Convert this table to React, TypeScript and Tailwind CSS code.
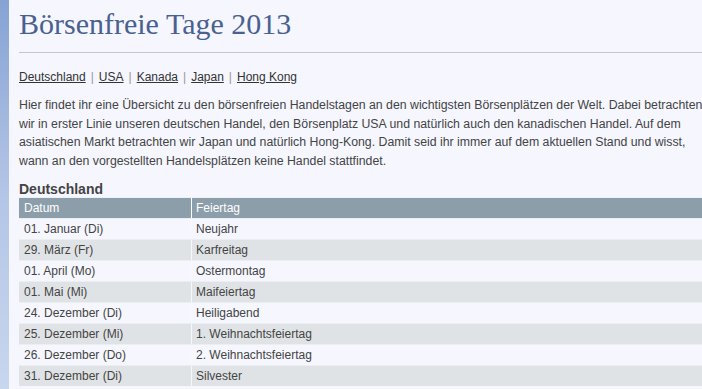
import React from "react";

const rows: [string, string][] = [
  ["01. Januar (Di)", "Neujahr"],
  ["29. März (Fr)", "Karfreitag"],
  ["01. April (Mo)", "Ostermontag"],
  ["01. Mai (Mi)", "Maifeiertag"],
  ["24. Dezember (Di)", "Heiligabend"],
  ["25. Dezember (Mi)", "1. Weihnachtsfeiertag"],
  ["26. Dezember (Do)", "2. Weihnachtsfeiertag"],
  ["31. Dezember (Di)", "Silvester"],
];

export default function App() {
  return (
    <div className="flex w-[702px] h-[389px] overflow-hidden bg-[#f5f6fe]">
      <div className="w-[9px] shrink-0 bg-gradient-to-b from-[#86a3d4] via-[#b4c6e6] to-[#c8d6ee]" />
      <div
        className="flex-1 pl-[10px] text-[#444] text-[12px]"
        style={{ fontFamily: '"Liberation Sans", Arial, sans-serif' }}
      >
        <h1
          className="text-[30px] leading-none text-[#4a6190] pt-[9px] pb-[13px]"
          style={{ fontFamily: '"Liberation Serif", "Times New Roman", serif' }}
        >
          Börsenfreie Tage 2013
        </h1>
        <div className="h-px bg-[#c4c6d0]" />
        <div className="mt-[16px] flex items-center gap-[5px] text-[#333] leading-[16px]">
          <a className="underline">Deutschland</a>
          <span className="text-[#999]">|</span>
          <a className="underline">USA</a>
          <span className="text-[#999]">|</span>
          <a className="underline">Kanada</a>
          <span className="text-[#999]">|</span>
          <a className="underline">Japan</a>
          <span className="text-[#999]">|</span>
          <a className="underline">Hong Kong</a>
        </div>
        <p className="mt-[11px] leading-[18.5px] text-[12.3px] text-[#444] whitespace-nowrap">
          Hier findet ihr eine Übersicht zu den börsenfreien Handelstagen an den wichtigsten Börsenplätzen der Welt. Dabei betrachten
          <br />
          wir in erster Linie unseren deutschen Handel, den Börsenplatz USA und natürlich auch den kanadischen Handel. Auf dem
          <br />
          asiatischen Markt betrachten wir Japan und natürlich Hong-Kong. Damit seid ihr immer auf dem aktuellen Stand und wisst,
          <br />
          wann an den vorgestellten Handelsplätzen keine Handel stattfindet.
        </p>
        <h2 className="mt-[11px] text-[14px] font-bold text-[#444] leading-[17px]">Deutschland</h2>
        <div className="-mt-[1px] border-t border-[#eef0f6]">
          <div className="flex h-[20px] bg-[#8b9eaa] text-white">
            <div className="w-[173px] pl-[5px] flex items-center border-r border-white">Datum</div>
            <div className="flex-1 pl-[4px] flex items-center">Feiertag</div>
          </div>
          {rows.map(([d, f], i) => (
            <div
              key={d}
              className={
                "flex h-[21px] border-t border-[#eceef2] " +
                (i % 2 === 1 ? "bg-[#e0e3e6]" : "bg-[#f5f6fe]")
              }
            >
              <div className="w-[173px] pl-[5px] flex items-center border-r border-[#f7f8fc]">{d}</div>
              <div className="flex-1 pl-[4px] flex items-center">{f}</div>
            </div>
          ))}
        </div>
      </div>
    </div>
  );
}
